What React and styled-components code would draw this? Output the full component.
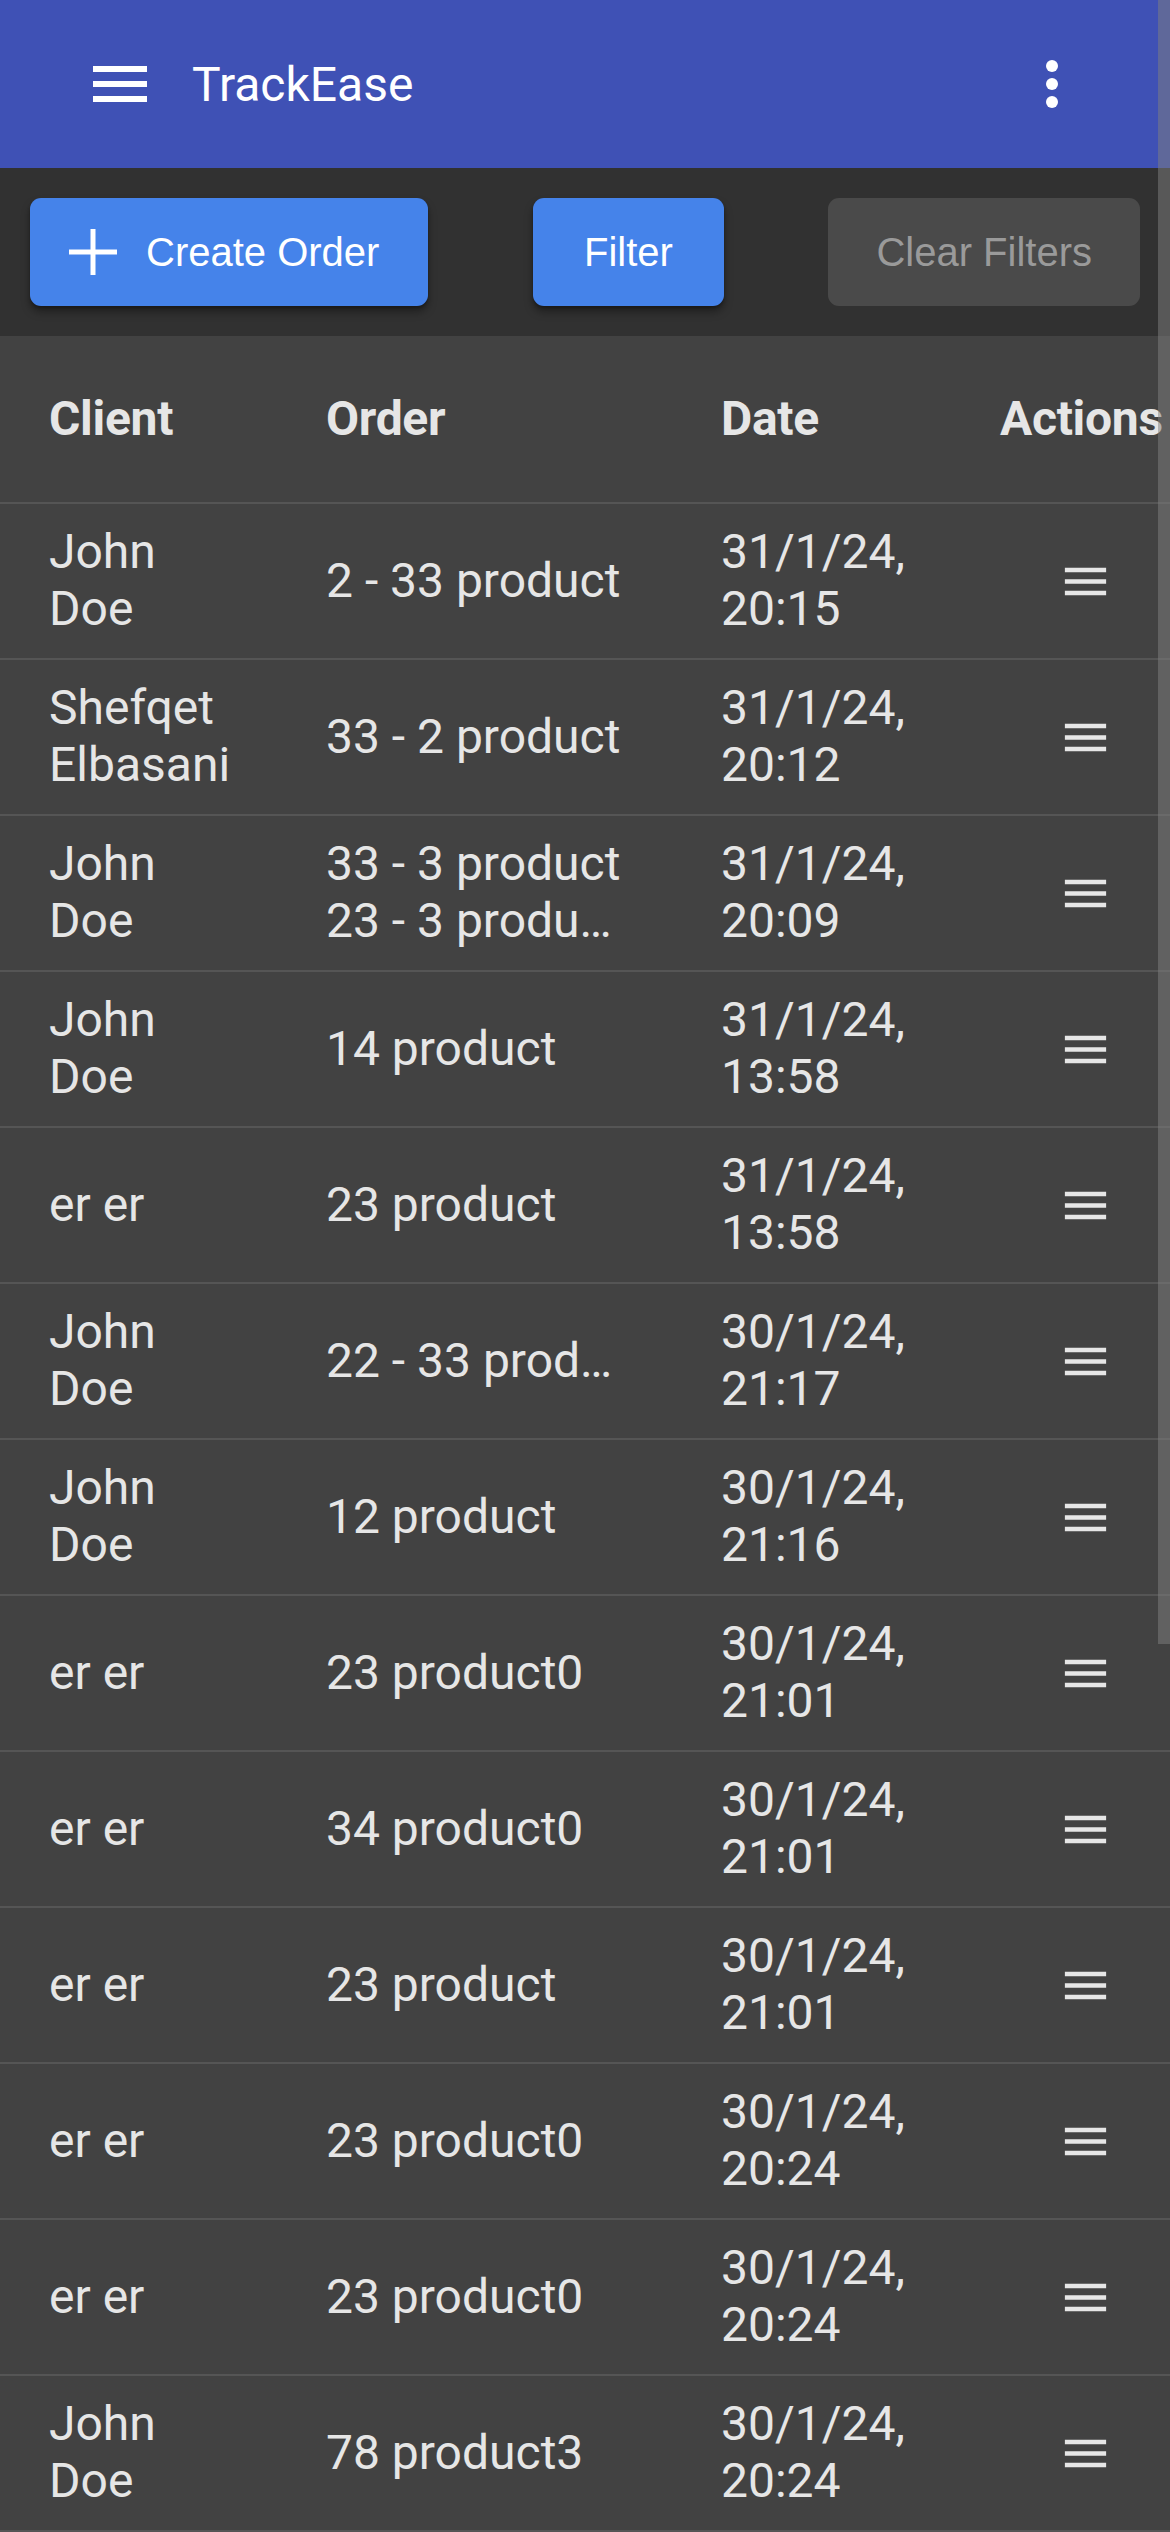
import React from "react";
import styled, { createGlobalStyle } from "styled-components";

const GlobalStyle = createGlobalStyle`
  html, body {
    margin: 0;
    padding: 0;
    background: #424242;
    overflow-x: hidden;
  }
  * {
    box-sizing: border-box;
  }
`;

const Page = styled.div`
  width: 1170px;
  min-height: 2532px;
  background: #424242;
  font-family: Roboto, "Liberation Sans", sans-serif;
  overflow: hidden;
`;

const AppBar = styled.header`
  height: 168px;
  background: #3f51b5;
  display: flex;
  align-items: center;
  padding: 0 84px;
  color: #fff;
`;

const IconButton = styled.button`
  width: 72px;
  height: 72px;
  padding: 0;
  border: none;
  background: none;
  color: #fff;
  display: flex;
  align-items: center;
  justify-content: center;
  cursor: pointer;
`;

const Title = styled.h1`
  flex: 1;
  margin: 2px 0 0 36px;
  font-size: 48px;
  font-weight: 400;
  line-height: 1;
`;

const MoreButton = styled(IconButton)`
  margin-right: -2px;
`;

const Toolbar = styled.div`
  height: 168px;
  background: #313131;
  display: flex;
  align-items: center;
  justify-content: space-between;
  padding: 0 30px;
`;

const Button = styled.button`
  height: 108px;
  border: none;
  border-radius: 11px;
  display: flex;
  align-items: center;
  gap: 29px;
  font-family: "Liberation Sans", Arial, sans-serif;
  font-size: 40px;
  cursor: pointer;
  background: ${(p) => (p.muted ? "#4a4a4a" : "#4583ea")};
  color: ${(p) => (p.muted ? "#9a9a9a" : "#ffffff")};
  box-shadow: ${(p) =>
    p.muted ? "none" : "0 6px 9px rgba(0, 0, 0, 0.35), 0 2px 3px rgba(0, 0, 0, 0.25)"};
  padding: ${(p) => (p.withIcon ? "0 49px 0 39px" : p.muted ? "0 48px" : "0 51px")};
`;

const Table = styled.div`
  color: #e6e6e6;
`;

const Row = styled.div`
  display: grid;
  grid-template-columns: 277px 395px 279px 1fr;
  align-items: center;
  padding-left: 49px;
  border-bottom: 2px solid #555555;
  min-height: ${(p) => (p.head ? "168px" : "156px")};
  font-size: 48px;
  line-height: 56.9px;
  font-weight: ${(p) => (p.head ? 700 : 400)};
`;

const HeadCell = styled.div`
  white-space: nowrap;
  letter-spacing: -0.3px;
`;

const ClientCell = styled.div`
  max-width: 195px;
`;

const OrderCell = styled.div`
  width: 340px;
`;

const OrderLine = styled.div`
  white-space: nowrap;
  overflow: hidden;
  text-overflow: ellipsis;
`;

const DateCell = styled.div`
  max-width: 240px;
`;

const ActionCell = styled.div`
  display: flex;
  padding-left: 58px;
`;

const ScrollThumb = styled.div`
  position: fixed;
  top: 0;
  right: 0;
  width: 12px;
  height: 1644px;
  background: rgba(128, 128, 128, 0.5);
`;

const MenuIcon = ({ size }) => (
  <svg width={size} height={size} viewBox="0 0 24 24" fill="currentColor">
    <path d="M3 18h18v-2H3zm0-5h18v-2H3zm0-7v2h18V6z" />
  </svg>
);

const MoreIcon = () => (
  <svg width="72" height="72" viewBox="0 0 24 24" fill="currentColor">
    <circle cx="12" cy="6" r="2" />
    <circle cx="12" cy="12" r="2" />
    <circle cx="12" cy="18" r="2" />
  </svg>
);

const PlusIcon = () => (
  <svg width="48" height="48" viewBox="0 0 48 48" stroke="currentColor" strokeWidth="5">
    <line x1="24" y1="1" x2="24" y2="47" />
    <line x1="0" y1="24" x2="48" y2="24" />
  </svg>
);

const orders = [
  { client: "John Doe", items: ["2 - 33 product"], date: "31/1/24, 20:15" },
  { client: "Shefqet Elbasani", items: ["33 - 2 product"], date: "31/1/24, 20:12" },
  { client: "John Doe", items: ["33 - 3 product", "23 - 3 produ…"], date: "31/1/24, 20:09" },
  { client: "John Doe", items: ["14 product"], date: "31/1/24, 13:58" },
  { client: "er er", items: ["23 product"], date: "31/1/24, 13:58" },
  { client: "John Doe", items: ["22 - 33 prod…"], date: "30/1/24, 21:17" },
  { client: "John Doe", items: ["12 product"], date: "30/1/24, 21:16" },
  { client: "er er", items: ["23 product0"], date: "30/1/24, 21:01" },
  { client: "er er", items: ["34 product0"], date: "30/1/24, 21:01" },
  { client: "er er", items: ["23 product"], date: "30/1/24, 21:01" },
  { client: "er er", items: ["23 product0"], date: "30/1/24, 20:24" },
  { client: "er er", items: ["23 product0"], date: "30/1/24, 20:24" },
  { client: "John Doe", items: ["78 product3"], date: "30/1/24, 20:24" },
];

const App = () => {
  return (
    <Page>
      <GlobalStyle />
      <AppBar>
        <IconButton>
          <MenuIcon size={72} />
        </IconButton>
        <Title>TrackEase</Title>
        <MoreButton>
          <MoreIcon />
        </MoreButton>
      </AppBar>
      <Toolbar>
        <Button withIcon>
          <PlusIcon />
          Create Order
        </Button>
        <Button>Filter</Button>
        <Button muted>Clear Filters</Button>
      </Toolbar>
      <Table>
        <Row head>
          <HeadCell>Client</HeadCell>
          <HeadCell>Order</HeadCell>
          <HeadCell>Date</HeadCell>
          <HeadCell>Actions</HeadCell>
        </Row>
        {orders.map((o, i) => (
          <Row key={i}>
            <ClientCell>{o.client}</ClientCell>
            <OrderCell>
              {o.items.map((item, j) => (
                <OrderLine key={j}>{item}</OrderLine>
              ))}
            </OrderCell>
            <DateCell>{o.date}</DateCell>
            <ActionCell>
              <MenuIcon size={55} />
            </ActionCell>
          </Row>
        ))}
      </Table>
      <ScrollThumb />
    </Page>
  );
};

export default App;
